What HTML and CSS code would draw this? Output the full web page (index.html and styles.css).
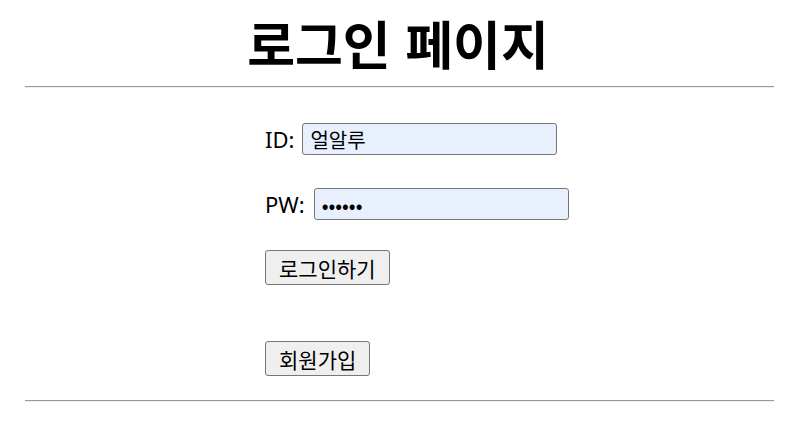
FILE: index.html
```html
<!DOCTYPE html>
<html lang="ko">
<head>
    <meta charset="UTF-8">
    <meta name="viewport" content="width=device-width, initial-scale=1.0">
    <title>로그인 페이지</title>
    <link rel="stylesheet" href="styles.css">
</head>
<body>
    <h1 class="title">로그인 페이지</h1>
    <hr class="rule">

    <!-- 로그인 폼 -->
    <form class="login-form">
        <div class="row">
            <label for="user-id">ID:</label>
            <input type="text" id="user-id" class="field" value="얼알루">
        </div>
        <div class="row pw-row">
            <label for="user-pw">PW:</label>
            <input type="password" id="user-pw" class="field" value="123456">
        </div>
        <div class="row login-row">
            <button type="button" class="btn">로그인하기</button>
        </div>
        <div class="row signup-row">
            <button type="button" class="btn">회원가입</button>
        </div>
    </form>

    <hr class="rule">
</body>
</html>
```

FILE: styles.css
```css
body {
    margin: 0;
    padding: 0;
    background: #fff;
    color: #000;
    font-family: "Noto Sans", "Noto Sans CJK KR", sans-serif;
}
.title {
    margin: 0;
    height: 86px;
    line-height: 86px;
    text-align: center;
    font-size: 52px;
    font-weight: bold;
    font-family: "Noto Sans CJK KR", sans-serif;
}
.rule {
    margin: 0 22px 0 25px;
    height: 0;
    border: none;
    border-top: 1px solid #9a9a9a;
    border-bottom: 1px solid #eeeeee;
}
.login-form {
    display: flex;
    flex-direction: column;
    padding: 35px 0 24px 265px;
}
.row {
    display: flex;
    align-items: center;
    gap: 8px;
    height: 32px;
    font-size: 22px;
}
.pw-row {
    margin-top: 33px;
    gap: 9px;
}
.login-row {
    margin-top: 30px;
    height: 35px;
}
.signup-row {
    margin-top: 56px;
    height: 35px;
}
.field {
    box-sizing: border-box;
    width: 255px;
    height: 32px;
    padding: 0 7px;
    border: 1px solid #767676;
    border-radius: 3px;
    background: #e8f0fe;
    font-size: 20px;
    font-family: "Noto Sans CJK KR", sans-serif;
}
.btn {
    box-sizing: border-box;
    height: 35px;
    padding: 0 13px;
    border: 1px solid #767676;
    border-radius: 3px;
    background: #efefef;
    font-size: 21px;
    font-family: "Noto Sans CJK KR", sans-serif;
    color: #000;
}
```
